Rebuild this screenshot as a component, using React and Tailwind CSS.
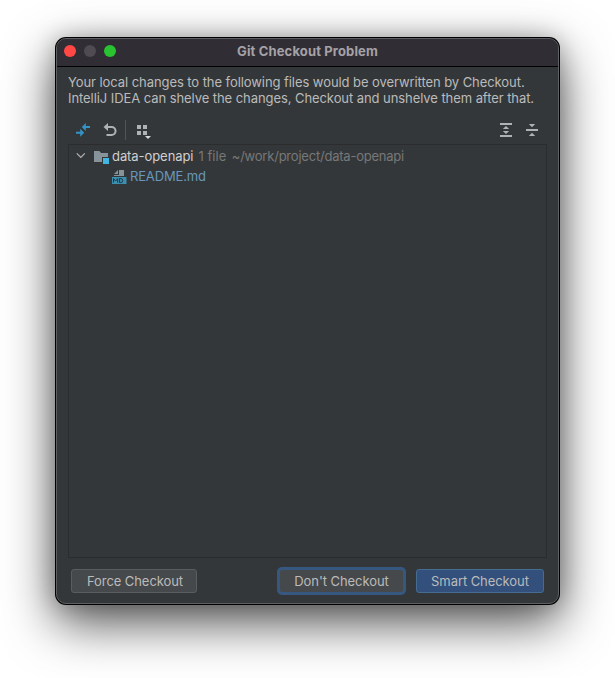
import React from "react";

function DiffIcon() {
  return (
    <svg width="16" height="16" viewBox="0 0 16 16" fill="#3592c4">
      <path d="M15 4H10.8V1L6.8 5 10.8 9V6H15Z" />
      <path d="M1 9.8H5.2V6.8L9.2 10.8 5.2 14.8V11.8H1Z" />
    </svg>
  );
}

function RollbackIcon() {
  return (
    <svg width="16" height="16" viewBox="0 0 16 16" fill="none">
      <path d="M4 5H9.6a3.9 3.9 0 0 1 0 7.9H4.5" stroke="#afb1b3" strokeWidth="2" />
      <path d="M6 1V9L1.5 5Z" fill="#afb1b3" />
    </svg>
  );
}

function GroupByIcon() {
  return (
    <svg width="18" height="18" viewBox="0 0 18 18" fill="#afb1b3">
      <path d="M2 3h4v4H2zM8 3h4v4H8zM2 9h4v4H2zM8 9h4v4H8z" />
      <path d="M10 14h6l-3 3z" fill="#d8d9da" />
    </svg>
  );
}

function ExpandAllIcon() {
  return (
    <svg width="16" height="16" viewBox="0 0 16 16" fill="#afb1b3">
      <path d="M2 1h12v2H2zM2 13h12v2H2zM8 4l3.2 3H4.8zM8 12l3.2-3H4.8z" />
    </svg>
  );
}

function CollapseAllIcon() {
  return (
    <svg width="16" height="16" viewBox="0 0 16 16" fill="#afb1b3">
      <path d="M2 7h12v2H2zM4.8 2h6.4L8 5.2zM4.8 14h6.4L8 10.8z" />
    </svg>
  );
}

function ModuleIcon() {
  return (
    <svg width="16" height="16" viewBox="0 0 16 16">
      <path d="M1 2h5.3l1.8 2H15v4H9v5H1z" fill="#87939a" />
      <path d="M10 9h6v6h-6z" fill="#40b6e0" />
    </svg>
  );
}

function MarkdownIcon() {
  return (
    <svg width="16" height="16" viewBox="0 0 16 16">
      <path d="M7 1v4H3z" fill="#87939a" />
      <path d="M8 1h5v6H3V6h5z" fill="#87939a" />
      <path d="M1 8h14.5v7H1z" fill="#3d8fb0" />
      <path
        d="M2.5 13.6V9.6L4.6 12 6.7 9.6v4M8.6 9.6v4M8.4 9.6h1.4q1.9 0 1.9 2t-1.9 2H8.4"
        fill="none"
        stroke="#1f3742"
      />
    </svg>
  );
}

export default function App() {
  return (
    <div className="h-[678px] w-[615px] overflow-hidden bg-white pl-[55px] pt-[37px] font-['Inter','Liberation_Sans',sans-serif] text-[13px] tracking-[-0.07px] text-[#bbbbbb]">
      <div className="h-[568px] w-[505px] rounded-[11px] bg-black p-px shadow-[0_18px_50px_rgba(0,0,0,0.68),0_0_22px_rgba(0,0,0,0.22)]">
        <div className="flex h-full flex-col overflow-hidden rounded-[10px] border border-[#5d6062] bg-[#343739]">
          <header className="-mx-px grid h-[28px] shrink-0 grid-cols-[1fr_auto_1fr] items-center border-b border-black bg-[#312d34] pb-[3px] pl-2 pr-[8px]">
            <div className="flex gap-2">
              <span className="size-3 rounded-full bg-[#ff4845]" />
              <span className="size-3 rounded-full bg-[#504b53]" />
              <span className="size-3 rounded-full bg-[#29c231]" />
            </div>
            <h1 className="font-bold leading-4 tracking-[0.14px] text-[#a5a2a7]">Git Checkout Problem</h1>
          </header>

          <p className="whitespace-nowrap pl-[11px] pt-[7px] leading-4">
            Your local changes to the following files would be overwritten by Checkout.
            <br />
            IntelliJ IDEA can shelve the changes, Checkout and unshelve them after that.
          </p>

          <div className="mt-[14px] flex h-5 items-center pl-[18px] pr-[18px]">
            <DiffIcon />
            <span className="ml-[11px]"><RollbackIcon /></span>
            <span className="ml-[7px] h-5 w-px bg-[#515557]" />
            <span className="ml-[9px] mt-[2px]"><GroupByIcon /></span>
            <span className="ml-auto"><ExpandAllIcon /></span>
            <span className="ml-[10px]"><CollapseAllIcon /></span>
          </div>

          <div className="ml-[11px] mt-1 h-[414px] w-[479px] shrink-0 border border-[#2a2c2e] pt-[2px]">
            <div className="flex h-5 items-center">
              <svg className="ml-[7px]" width="10" height="10" viewBox="0 0 10 10" fill="none">
                <path d="M.8 1.4 4.8 5.4 8.8 1.4" stroke="#afb1b3" strokeWidth="1.3" />
              </svg>
              <span className="ml-[7px]"><ModuleIcon /></span>
              <span className="ml-[3px] text-[#d0d0d0]">data-openapi</span>
              <span className="ml-[5px] tracking-[0.03px] text-[#787878]">1 file</span>
              <span className="ml-[5.5px] tracking-[-0.22px] text-[#787878]">~/work/project/data-openapi</span>
            </div>
            <div className="flex h-5 items-center pl-[42px]">
              <MarkdownIcon />
              <span className="ml-[3px] tracking-[-0.16px] text-[#6897bb]">README.md</span>
            </div>
          </div>

          <footer className="mt-[9px] flex h-7 items-center pl-[14px]">
            <button className="h-6 w-[126px] rounded-[3px] border border-[#5a5d5f] bg-[#46494b] pl-[2px] leading-5">Force Checkout</button>
            <button className="ml-[80px] h-7 w-[129px] rounded-[5px] border-[3px] border-[#365880] bg-[#46494b] leading-5">Don't Checkout</button>
            <button className="ml-[10px] h-6 w-[128px] rounded-[3px] border border-[#456d92] bg-[#32507b] leading-5">Smart Checkout</button>
          </footer>
        </div>
      </div>
    </div>
  );
}
